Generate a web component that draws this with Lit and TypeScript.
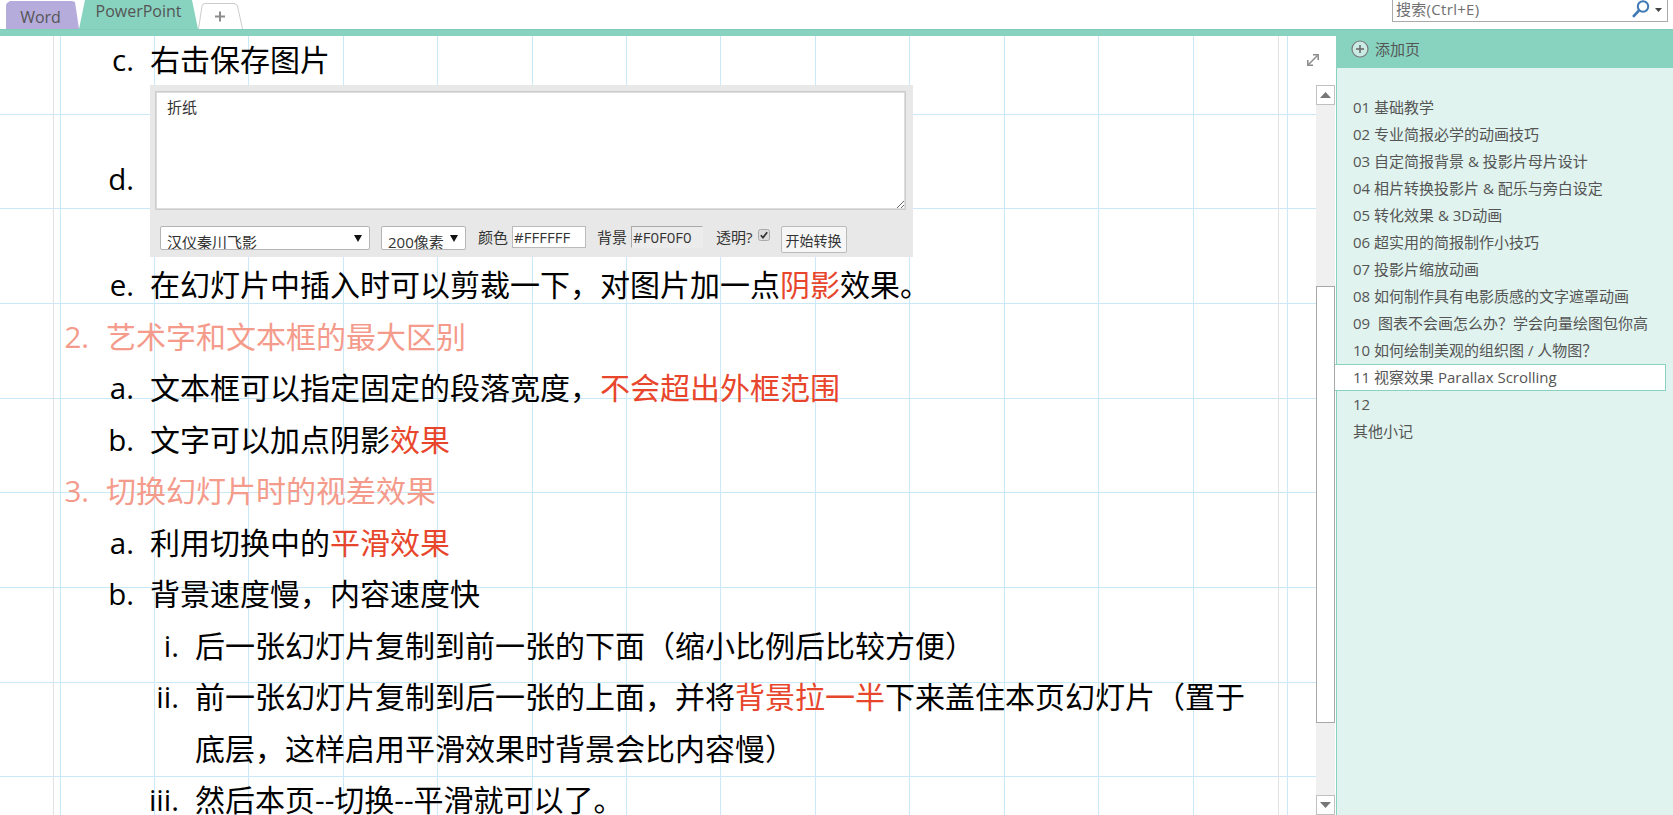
import { LitElement, html, css, svg } from "lit";
import { customElement } from "lit/decorators.js";

type Seg = string | { r: string };
interface Row { lv: number; m: string; t: Seg[]; head?: boolean; widget?: boolean }

const ROWS: Row[] = [
  { lv: 2, m: "c.", t: ["右击保存图片"] },
  { lv: 2, m: "d.", t: [], widget: true },
  { lv: 2, m: "e.", t: ["在幻灯片中插入时可以剪裁一下，对图片加一点", { r: "阴影" }, "效果。"] },
  { lv: 1, m: "2.", t: ["艺术字和文本框的最大区别"], head: true },
  { lv: 2, m: "a.", t: ["文本框可以指定固定的段落宽度，", { r: "不会超出外框范围" }] },
  { lv: 2, m: "b.", t: ["文字可以加点阴影", { r: "效果" }] },
  { lv: 1, m: "3.", t: ["切换幻灯片时的视差效果"], head: true },
  { lv: 2, m: "a.", t: ["利用切换中的", { r: "平滑效果" }] },
  { lv: 2, m: "b.", t: ["背景速度慢，内容速度快"] },
  { lv: 3, m: "i.", t: ["后一张幻灯片复制到前一张的下面（缩小比例后比较方便）"] },
  { lv: 3, m: "ii.", t: ["前一张幻灯片复制到后一张的上面，并将", { r: "背景拉一半" }, "下来盖住本页幻灯片（置于底层，这样启用平滑效果时背景会比内容慢）"] },
  { lv: 3, m: "iii.", t: ["然后本页--切换--平滑就可以了。"] },
];

const PAGES = [
  "01 基础教学",
  "02 专业简报必学的动画技巧",
  "03 自定简报背景 & 投影片母片设计",
  "04 相片转换投影片 & 配乐与旁白设定",
  "05 转化效果 & 3D动画",
  "06 超实用的简报制作小技巧",
  "07 投影片缩放动画",
  "08 如何制作具有电影质感的文字遮罩动画",
  "09  图表不会画怎么办？学会向量绘图包你高",
  "10 如何绘制美观的组织图 / 人物图？",
  "11 视察效果 Parallax Scrolling",
  "12",
  "其他小记",
];

const VX = Array.from({ length: 14 }, (_, k) => Math.floor(60 + 94.42 * k));
const HY = Array.from({ length: 8 }, (_, k) => Math.floor(78 + 94.7 * k));

@customElement("app-root")
export class AppRoot extends LitElement {
  static styles = css`
    :host {
      display: block;
      width: 1673px;
      height: 815px;
      overflow: hidden;
      background: #fff;
      font-family: "Open Sans", "Noto Sans CJK SC", sans-serif;
    }
    .shell { display: flex; flex-direction: column; height: 815px; }
    .tabs { height: 29px; display: flex; align-items: flex-end; padding-left: 6px; flex: none; }
    .tab { display: flex; justify-content: center; color: #555; font-size: 16px; }
    .word {
      width: 73px; height: 28px; background: #b5acdc; align-items: center;
      clip-path: polygon(0 100%, 0 4px, 1px 2px, 4px 0, 66px 0, 69px 1px, 100% 100%);
      padding-top: 3px; box-sizing: border-box; padding-right: 4px;
    }
    .ppt {
      width: 119px; height: 29px; background: #88d3c0; align-items: center;
      clip-path: polygon(0 100%, 6px 0, 113px 0, 100% 100%);
      padding-bottom: 7px; box-sizing: border-box;
    }
    .plus { width: 45px; height: 26px; display: block; }
    .search {
      margin-left: auto; margin-right: 5px; align-self: flex-start; width: 276px; height: 22px;
      box-sizing: border-box; border: 1px solid #aaa; border-top: 0; background: #fff;
      display: flex; align-items: flex-start; padding: 0 1px 0 3px; color: #6f6f6f; font-size: 15px; letter-spacing: .3px;
    }
    .search span { flex: 1; line-height: 19px; }
    .search svg { display: block; }
    .caret-s { margin-left: 2px; }
    .band { height: 7px; background: #88d3c0; border-top: 1px solid #7fcdb9; box-sizing: border-box; flex: none; }
    .body { flex: 1; display: flex; min-height: 0; }
    .page { position: relative; width: 1316px; flex: none; }
    .rules { position: absolute; left: 0; top: 0; width: 1316px; height: 779px; }
    .content { position: relative; padding: 0 60px 0 0; }
    .row { display: flex; font-size: 30px; line-height: 51.5px; color: #000; }
    .first { margin-top: -2px; line-height: 51px; }
    .mark { flex: none; text-align: right; font-size: 29.5px; }
    .lv1 .mark { width: 89px; margin-right: 17px; }
    .lv2 .mark { width: 134px; margin-right: 16px; }
    .lv3 .mark { width: 179px; margin-right: 16px; }
    .head { color: #f49b8b; }
    .red { color: #e8462c; }
    .txt { flex: 1; min-width: 0; }
    .widget-row { align-items: flex-start; height: 172px; margin-bottom: 2px; }
    .widget-row .mark { margin-top: 68px; }
    .widget {
      width: 763px; height: 172px; box-sizing: border-box; background: #e8e8e8;
      padding: 6px 7px 0 5px; display: flex; flex-direction: column; font-size: 15px; line-height: 20px; color: #333;
    }
    textarea {
      display: block; width: 751px; height: 119px; flex: none; box-sizing: border-box; margin: 0; border: 1px solid #ccc; box-shadow: 0 0 0 1px #ddd inset;
      background: #fff; padding: 5px 11px; font: inherit; color: #333; outline: none; resize: both;
    }
    .ctrls { display: flex; align-items: flex-start; padding: 16px 0 0 5px; height: 47px; box-sizing: border-box; }
    .sel {
      box-sizing: border-box; height: 24px; background: #fff; border: 1px solid #b4b4b4; border-radius: 2px;
      display: flex; justify-content: space-between; padding: 5px 7px 0 6px; overflow: hidden; line-height: 20px;
    }
    .s1 { width: 210px; margin-right: 11px; }
    .s2 { width: 85px; margin-right: 12px; padding-right: 7px; }
    .caret { width: 0; height: 0; border: 4px solid transparent; border-top: 7px solid #111; border-bottom: 0; margin-top: 3px; flex: none; }
    .lab { line-height: 20px; margin-top: 1px; }
    input[type="text"] {
      box-sizing: border-box; width: 74px; height: 22px; margin: 0 0 0 4px; padding: 0 1px; border: 1px solid #bbb;
      font: 15px "Open Sans", sans-serif; color: #333; background: #fff; outline: none;
    }
    input.col { margin-right: 11px; }
    input.dim { width: 72px; margin-right: 13px; background: #ececec; border-color: #aaa #ececec #ececec #aaa; }
    .check { display: block; margin: 3px 11px 0 5px; flex: none; }
    button {
      box-sizing: border-box; width: 66px; height: 27px; margin: 0; padding: 0; border: 1px solid #bbb; background: #f6f6f6;
      font: 14px "Open Sans", "Noto Sans CJK SC", sans-serif; color: #333; border-radius: 2px;
    }
    .expand { position: absolute; left: 1306px; top: 17px; z-index: 1; }
    .scroll { width: 19px; flex: none; margin-right: 1px; padding-top: 49px; display: flex; flex-direction: column; background: #fff; position: relative; }
    .sbtn { height: 20px; box-sizing: border-box; border: 1px solid #c0c0c0; background: #fff; display: flex; align-items: center; justify-content: center; flex: none; }
    .track { flex: 1; background: #f0f0f0; display: flex; flex-direction: column; padding-top: 181px; padding-bottom: 72px; }
    .thumb { flex: 1; background: #fff; border: 1px solid #a8a8a8; }
    .side { flex: 1; display: flex; flex-direction: column; background: #e0f3ee; border-left: 1px solid #88d3c0; min-width: 0; }
    .addp {
      background: #88d3c0; display: flex; align-items: center; gap: 6px; padding-left: 15px; margin-left: -1px;
      color: #555; font-size: 15px; padding-bottom: 8px; height: 24px; flex: none;
    }
    .addp svg { display: block; margin-top: 2px; }
    .list { padding-top: 26px; }
    .item { height: 27px; line-height: 27px; font-size: 15px; color: #555; padding-left: 16px; white-space: pre; box-sizing: border-box; }
    .item.on {
      background: #fff; border: 1px solid #88d3c0; border-left: 0; margin: 0 7px 0 -2px; padding-left: 18px; line-height: 25px;
    }
  `;

  private rules() {
    return html`<svg class="rules" shape-rendering="crispEdges" viewBox="0 0 1316 779">
      ${HY.map((y) => svg`<line x1="0" x2="1316" y1=${y + 0.5} y2=${y + 0.5} stroke="#c9e9f8" />`)}
      ${VX.map((x) => svg`<line x1=${x + 0.5} x2=${x + 0.5} y1="0" y2="779" stroke="#c9e9f8" />`)}
      <line x1="53.5" x2="53.5" y1="0" y2="779" stroke="#e2e2e2" />
      <line x1="1278.5" x2="1278.5" y1="0" y2="779" stroke="#e2e2e2" />
    </svg>`;
  }

  private widget() {
    return html`<div class="widget">
      <textarea .value=${"折纸"}></textarea>
      <div class="ctrls">
        <div class="sel s1"><span>汉仪秦川飞影</span><i class="caret"></i></div>
        <div class="sel s2"><span>200像素</span><i class="caret"></i></div>
        <span class="lab">颜色</span>
        <input class="col" type="text" .value=${"#FFFFFF"} />
        <span class="lab">背景</span>
        <input class="dim" type="text" .value=${"#F0F0F0"} />
        <span class="lab">透明?</span>
        <svg class="check" width="12" height="12" viewBox="0 0 12 12">
          <rect x=".5" y=".5" width="11" height="11" rx="2" fill="#dcdcdc" stroke="#aaa" />
          <path d="M2.8 6.2 L5 8.6 L9.2 3.2" fill="none" stroke="#333" stroke-width="1.7" />
        </svg>
        <button>开始转换</button>
      </div>
    </div>`;
  }

  render() {
    return html`<div class="shell">
      <div class="tabs">
        <div class="tab word">Word</div>
        <div class="tab ppt">PowerPoint</div>
        <svg class="plus" viewBox="0 0 45 26">
          <path d="M0.5 26 L4 3 Q4.5 0.5 7 0.5 L36 0.5 Q38.5 0.5 39.5 3 L44.5 26" fill="#fff" stroke="#ccc" />
          <path d="M17 13.5h10M22 8.5v10" stroke="#8c8c8c" stroke-width="2" fill="none" />
        </svg>
        <div class="search">
          <span>搜索(Ctrl+E)</span>
          <svg width="20" height="19" viewBox="0 0 20 19"><circle cx="12" cy="6.5" r="5.2" fill="none" stroke="#3f79b5" stroke-width="2" /><path d="M8 10.5 L2 16.8" stroke="#3f79b5" stroke-width="2.6" /></svg>
          <svg class="caret-s" width="13" height="19" viewBox="0 0 13 19"><path d="M2 8h7l-3.5 4z" fill="#444" /></svg>
        </div>
      </div>
      <div class="band"></div>
      <div class="body">
        <div class="page">
          ${this.rules()}
          <div class="content">
            ${ROWS.map(
              (r, i) => html`<div class="row lv${r.lv} ${r.head ? "head" : ""} ${i === 0 ? "first" : ""} ${r.widget ? "widget-row" : ""}">
                <div class="mark">${r.m}</div>
                ${r.widget
                  ? this.widget()
                  : html`<div class="txt">${r.t.map((s) => (typeof s === "string" ? s : html`<span class="red">${s.r}</span>`))}</div>`}
              </div>`
            )}
          </div>
          <svg class="expand" width="14" height="14" viewBox="0 0 14 14" fill="none" stroke="#8a8a8a" stroke-width="1.5">
            <path d="M2.5 11.5 L11.5 2.5" /><path d="M7 1.8h5.2v5.2M1.8 7v5.2h5.2" />
          </svg>
        </div>
        <div class="scroll">
          <div class="sbtn"><svg width="11" height="6" viewBox="0 0 11 6"><path d="M5.5 0L11 6H0z" fill="#777" /></svg></div>
          <div class="track"><div class="thumb"></div></div>
          <div class="sbtn"><svg width="11" height="6" viewBox="0 0 11 6"><path d="M0 0h11L5.5 6z" fill="#777" /></svg></div>
        </div>
        <div class="side">
          <div class="addp">
            <svg width="18" height="18" viewBox="0 0 18 18"><circle cx="9" cy="9" r="8" fill="#fff" fill-opacity=".55" stroke="#7a7a7a" stroke-width="1.2" /><path d="M5 9h8M9 5v8" stroke="#666" stroke-width="1.5" /></svg>
            <span>添加页</span>
          </div>
          <div class="list">
            ${PAGES.map((p, i) => html`<div class="item ${i === 10 ? "on" : ""}">${p}</div>`)}
          </div>
        </div>
      </div>
    </div>`;
  }
}
